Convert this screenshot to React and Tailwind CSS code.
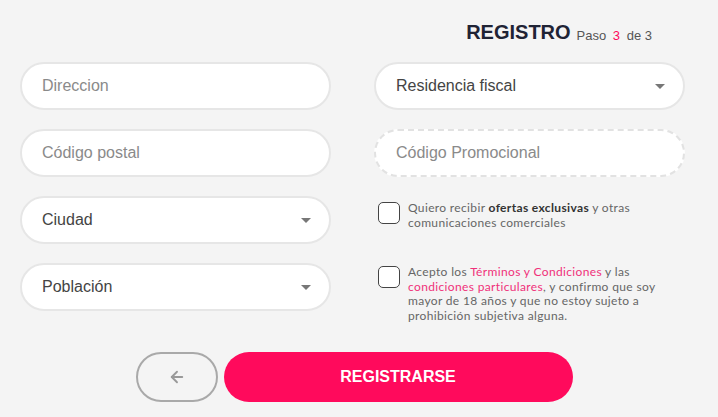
import { ArrowLeft } from 'lucide-react';

function Field({ label, select, dashed, dark }) {
	return (
		<div className={`h-12 rounded-full bg-white flex items-center pl-[20px] pr-[18px] ${dashed ? 'border-2 border-dashed border-[#e2e2e2]' : 'border-2 border-[#e6e6e6]'}`}>
			<span className={`flex-1 text-[16px] ${dark ? 'text-[#444]' : 'text-[#8a8a8a]'}`}>{label}</span>
			{select && <span className="w-0 h-0 border-l-[5px] border-r-[5px] border-t-[5px] border-l-transparent border-r-transparent border-t-[#777]" />}
		</div>
	);
}

function Check({ children }) {
	return (
		<div className="flex items-start gap-2 pl-1">
			<div className="w-[22px] h-[22px] shrink-0 rounded-[5px] border-[1.5px] border-[#444] bg-white" />
			<p className="w-[262px] text-[12px] leading-[14.5px] tracking-[0.35px] text-[#666] -mt-[1px]" style={{ fontFamily: 'Lato, sans-serif' }}>{children}</p>
		</div>
	);
}

export default function App() {
	return (
		<div className="w-[718px] h-[417px] bg-[#f4f4f4] overflow-hidden" style={{ fontFamily: '"Liberation Sans", Arial, sans-serif' }}>
			<div className="flex justify-end items-end h-[47px] pr-[66px] -mb-[10px]">
				<span className="text-[20px] font-bold text-[#1f2335]">REGISTRO</span>
				<span className="text-[13px] text-[#555] ml-[6px] mb-[2px]">Paso <span className="text-[#ff0a5c] mx-[3px]">3</span> de 3</span>
			</div>
			<div className="grid grid-cols-[311px_311px] gap-x-[43px] px-5 pt-[25px]">
				<div className="flex flex-col gap-[19px]">
					<Field label="Direccion" />
					<Field label="Código postal" />
					<Field label="Ciudad" select dark />
					<Field label="Población" select dark />
				</div>
				<div className="flex flex-col">
					<Field label="Residencia fiscal" select dark />
					<div className="mt-[19px]"><Field label="Código Promocional" dashed /></div>
					<div className="mt-[25px]">
						<Check>Quiero recibir <b className="text-[#333]">ofertas exclusivas</b> y otras comunicaciones comerciales</Check>
					</div>
					<div className="mt-[36px]">
						<Check>Acepto los <span className="text-[#f0307a]">Términos y Condiciones</span> y las <span className="text-[#f0307a]">condiciones particulares</span>, y confirmo que soy mayor de 18 años y que no estoy sujeto a prohibición subjetiva alguna.</Check>
					</div>
				</div>
			</div>
			<div className="flex justify-center gap-[6px] mt-[29px] pr-[10px]">
				<button className="w-[82px] h-[50px] rounded-full border-2 border-[#a9a9a9] flex items-center justify-center text-[#999]">
					<ArrowLeft size={18} strokeWidth={2.5} />
				</button>
				<button className="w-[349px] h-[50px] rounded-full bg-[#ff0a5c] text-white font-bold text-[16px]">REGISTRARSE</button>
			</div>
		</div>
	);
}
